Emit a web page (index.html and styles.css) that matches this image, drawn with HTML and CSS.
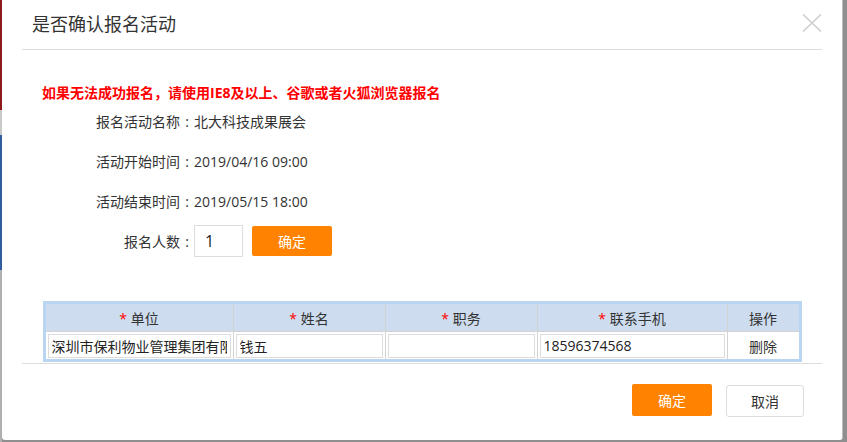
FILE: index.html
```html
<!DOCTYPE html>
<html lang="zh-CN">
<head>
  <meta charset="UTF-8" />
  <title>是否确认报名活动</title>
  <link rel="stylesheet" href="styles.css">
</head>
<body>
  <div class="dialog">
    <div class="dialog-head">
      <span class="dialog-title">是否确认报名活动</span>
      <button class="close-btn" title="关闭">
        <svg width="20" height="18" viewBox="0 0 20 18">
          <path d="M1 0.5 L19 17.5 M19 0.5 L1 17.5" stroke="#cfcfcf" stroke-width="1.6" fill="none" />
        </svg>
      </button>
    </div>
    <div class="dialog-body">
      <p class="notice">如果无法成功报名，请使用IE8及以上、谷歌或者火狐浏览器报名</p>
      <div class="info">
        <span class="label">报名活动名称<b>:</b></span><span>北大科技成果展会</span>
        <span class="label">活动开始时间<b>:</b></span><span>2019/04/16 09:00</span>
        <span class="label">活动结束时间<b>:</b></span><span>2019/05/15 18:00</span>
        <span class="label">报名人数<b>:</b></span>
        <span class="count">
          <input type="text" id="count" value="1" />
          <button class="btn-orange" onclick="buildRows()">确定</button>
        </span>
      </div>
      <table class="sign-table">
        <thead>
          <tr>
            <th class="c-unit"><i>*</i> 单位</th>
            <th class="c-name"><i>*</i> 姓名</th>
            <th class="c-job"><i>*</i> 职务</th>
            <th class="c-phone"><i>*</i> 联系手机</th>
            <th class="c-op">操作</th>
          </tr>
        </thead>
        <tbody id="rows">
          <tr>
            <td><input type="text" value="深圳市保利物业管理集团有限公司" /></td>
            <td><input type="text" value="钱五" /></td>
            <td><input type="text" value="" /></td>
            <td><input type="text" value="18596374568" /></td>
            <td class="op"><a href="#" onclick="this.closest('tr').remove(); return false;">删除</a></td>
          </tr>
        </tbody>
      </table>
    </div>
    <div class="dialog-foot">
      <button class="btn-orange btn-big">确定</button>
      <button class="btn-plain">取消</button>
    </div>
  </div>
  <script>
    function buildRows() {
      const n = parseInt(document.getElementById('count').value) || 1;
      const tbody = document.getElementById('rows');
      while (tbody.rows.length < n) {
        const tr = tbody.rows[0].cloneNode(true);
        tr.querySelectorAll('input').forEach(i => i.value = '');
        tbody.appendChild(tr);
      }
    }
  </script>
</body>
</html>
```

FILE: styles.css
```css
body {
  margin: 0;
  font-family: "Open Sans", "Noto Sans CJK SC", sans-serif;
  font-size: 14px;
  color: #333;
  background:
    linear-gradient(to bottom, #8e1b1b 0 110px, #c9c9c9 110px 135px, #2f5f9e 135px 270px, #b0b0b0 270px) left top / 2px 100% no-repeat,
    #8f8f8f;
  height: 442px;
  overflow: hidden;
}
.dialog {
  margin-left: 2px;
  width: 841px;
  height: 440px;
  background: #fff;
  border-right: 1px solid #bdbdbd;
  border-radius: 0 0 3px 3px;
  box-sizing: border-box;
  padding: 0 20px;
}
.dialog-head {
  height: 49px;
  border-bottom: 1px solid #ddd;
  display: flex;
  align-items: center;
  justify-content: space-between;
  padding: 0 0 0 10px;
}
.dialog-title {
  font-size: 18px;
  line-height: 24px;
  margin-top: -2px;
}
.close-btn {
  background: none;
  border: none;
  padding: 0;
  margin: -3px 0 0 0;
  width: 20px;
  height: 18px;
  cursor: pointer;
}
.close-btn svg {
  display: block;
}
.dialog-body {
  border-bottom: 1px solid #ddd;
  padding-bottom: 1px;
}
.notice {
  margin: 0;
  padding: 35px 0 0 20px;
  line-height: 16px;
  color: #ff0000;
  font-weight: bold;
}
.info {
  display: grid;
  grid-template-columns: 172px auto;
  grid-auto-rows: 40px;
  align-items: center;
}
.info .label {
  text-align: right;
}
.info .label b {
  display: inline-block;
  width: 14px;
  text-align: center;
  font-weight: normal;
}
.count {
  display: flex;
  align-items: center;
  gap: 9px;
}
.count input {
  width: 49px;
  height: 32px;
  box-sizing: border-box;
  border: 1px solid #ddd;
  padding: 0 10px;
  font-family: inherit;
  font-size: 16px;
  color: #222;
}
.btn-orange {
  background: #ff8300;
  color: #fff;
  border: none;
  border-radius: 2px;
  width: 80px;
  height: 30px;
  font-family: inherit;
  font-size: 14px;
  cursor: pointer;
}
.sign-table {
  margin: 40px auto 0;
  width: 759px;
  border-collapse: collapse;
  border: 3px solid #b9d5f1;
  table-layout: fixed;
}
.sign-table th {
  background: #cddcee;
  height: 27px;
  font-weight: normal;
  border-left: 1px solid #d3d3d3;
  border-bottom: 1px solid #d3d3d3;
  padding: 0;
}
.sign-table th:first-child {
  border-left: none;
}
.sign-table th i {
  font-style: normal;
  color: #ff0000;
}
.c-unit { width: 187px; }
.c-name { width: 151px; }
.c-job { width: 151px; }
.c-phone { width: 189px; }
.sign-table td {
  height: 27px;
  padding: 0 2px;
  border-left: 1px solid #d3d3d3;
}
.sign-table td:first-child {
  border-left: none;
}
.sign-table td input {
  width: 100%;
  height: 24px;
  box-sizing: border-box;
  border: 1px solid #ddd;
  padding: 0 3px;
  font-family: inherit;
  font-size: 14px;
  color: #222;
  display: block;
}
.sign-table td.op {
  text-align: center;
}
.sign-table td.op a {
  color: #333;
  text-decoration: none;
}
.dialog-foot {
  display: flex;
  justify-content: flex-end;
  gap: 14px;
  padding: 20px 18px 0 0;
}
.btn-big {
  height: 32px;
}
.btn-plain {
  width: 78px;
  height: 32px;
  margin-top: 1px;
  background: #fff;
  border: 1px solid #ddd;
  border-radius: 3px;
  font-family: inherit;
  font-size: 14px;
  color: #333;
  cursor: pointer;
}
```
